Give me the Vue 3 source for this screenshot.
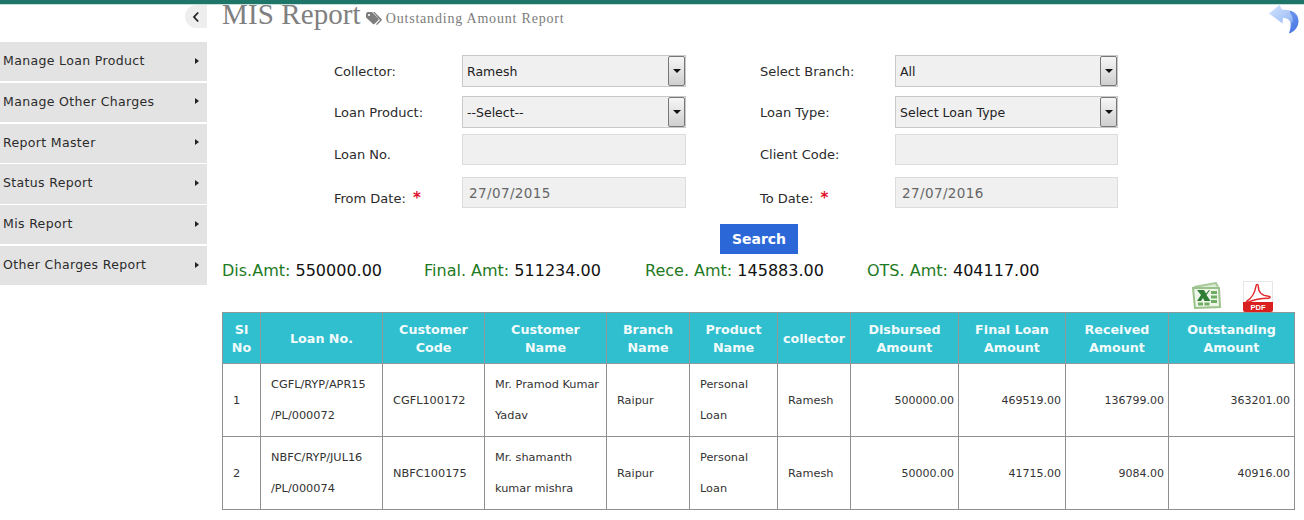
<template>
  <div class="page">
    <div class="topbar"></div>
    <div class="layout">
      <aside class="sidebar">
        <div class="collapse-row">
          <div class="collapse-btn">
            <svg width="8" height="12" viewBox="0 0 8 12"><path d="M6.200 1.500 2 6l4.200 4.500" fill="none" stroke="#222" stroke-width="1.800"/></svg>
          </div>
        </div>
        <ul class="menu">
          <li v-for="item in menu" :key="item">
            <span>{{ item }}</span>
            <i class="caret"></i>
          </li>
        </ul>
      </aside>

      <main class="content">
        <div class="heading">
          <h1>MIS Report</h1>
          <svg class="tag" width="16" height="14" viewBox="0 0 16 14">
            <path d="M0 1.500 1.500 0H6l6.500 6.500a1 1 0 0 1 0 1.400L8.400 12a1 1 0 0 1-1.400 0L0 5.500Z" fill="#7d7d7d"/>
            <path d="M8.500 0 15.500 7a1 1 0 0 1 0 1.400L11 13l-1-.8 4-4.200L7 0Z" fill="#7d7d7d"/>
            <circle cx="3" cy="3" r="1.100" fill="#fff"/>
          </svg>
          <span class="sub">Outstanding Amount Report</span>
          <svg class="back" width="30" height="30" viewBox="0 0 30 30">
            <defs>
              <linearGradient id="bk" x1="0" y1="0" x2="1" y2="1">
                <stop offset="0" stop-color="#d4e4fc"/>
                <stop offset=".55" stop-color="#a6c4f7"/>
                <stop offset="1" stop-color="#4a78e6"/>
              </linearGradient>
            </defs>
            <path d="M10.500 0 0 8.500 13.500 18.500l.5-5.500c4 .2 6.500 1.500 7.500 4.500.8 3-.2 7-1.500 11 5-1.500 9-6 9.400-11.500C29.800 9.500 23 4.500 13 4.500Z" fill="url(#bk)"/>
            <path d="M21 5.500C27 7 29.800 11 29.400 16.500 29 22 25 27 20 28.500c1.300-4 2.300-8 1.500-11C24.500 20 25 12 21 8Z" fill="#3f6fe4" opacity=".6"/>
          </svg>
        </div>

        <form class="filters" @submit.prevent>
          <template v-for="f in filters" :key="f.label">
            <label :class="{ low: !f.options }">{{ f.label }}<b v-if="f.req"> *</b></label>
            <div v-if="f.options" class="select">
              <span>{{ f.value }}</span>
              <span class="arrow"><i></i></span>
            </div>
            <input v-else class="field" type="text" disabled :value="f.value" />
          </template>
        </form>

        <div class="search-row"><button type="button">Search</button></div>

        <div class="totals">
          <span v-for="t in totals" :key="t.label" :style="{ width: t.w + 'px' }"><em>{{ t.label }}</em> {{ t.value }}</span>
        </div>

        <div class="exports">
          <svg width="31" height="27" viewBox="0 0 31 27">
            <path d="M3 5 25 1l2 4" fill="#dcebd6" stroke="#a9cb9b" stroke-width="2"/>
            <path d="M2 6h26l1 19-25 1Z" fill="#eef6ea" stroke="#9cc28c" stroke-width="2"/>
            <path d="M6 8h7l2 3.500L18 8h1l-3.500 5 4 6h-6l-1.500-3-2 3H6l4-6Z" fill="#2f7d34"/>
            <path d="M20 9h6v3h-6zM20 13.500h6v3h-6zM20 18h6v3h-6zM7 20.500h5v3H7zM13.500 20.500h5v3h-5z" fill="#6fae62"/>
          </svg>
          <svg width="32" height="31" viewBox="0 0 32 31">
            <path d="M1.500.5h29v22h-29z" fill="#fff" stroke="#e6e6e6"/>
            <path d="M5 20c5-3 8-9 9-15 .3-2 2.300-2 2.300.2 0 5.800 3.700 9.800 10.200 10 2.200 0 2.200 2-.2 2-6.800 0-14.300 1.300-20.300 4-1.700.5-2.200-.3-1-1.200Z" fill="none" stroke="#e2282c" stroke-width="1.500"/>
            <path d="M1 21h30v8a2 2 0 0 1-2 2H3a2 2 0 0 1-2-2Z" fill="#d9201f"/>
            <text x="16" y="29" text-anchor="middle" class="pdf">PDF</text>
          </svg>
        </div>

        <table>
          <colgroup>
            <col v-for="(w, i) in cols" :key="i" :style="{ width: w + 'px' }" />
          </colgroup>
          <thead>
            <tr>
              <th>Sl<br />No</th>
              <th>Loan No.</th>
              <th>Customer<br />Code</th>
              <th>Customer<br />Name</th>
              <th>Branch<br />Name</th>
              <th>Product<br />Name</th>
              <th>collector</th>
              <th>Disbursed<br />Amount</th>
              <th>Final Loan<br />Amount</th>
              <th>Received<br />Amount</th>
              <th>Outstanding<br />Amount</th>
            </tr>
          </thead>
          <tbody>
            <tr v-for="r in rows" :key="r.sl">
              <td>{{ r.sl }}</td>
              <td>{{ r.loan[0] }}<br />{{ r.loan[1] }}</td>
              <td>{{ r.code }}</td>
              <td>{{ r.name[0] }}<br />{{ r.name[1] }}</td>
              <td>Raipur</td>
              <td>Personal<br />Loan</td>
              <td>Ramesh</td>
              <td class="num">{{ r.disbursed }}</td>
              <td class="num">{{ r.final }}</td>
              <td class="num">{{ r.received }}</td>
              <td class="num">{{ r.outstanding }}</td>
            </tr>
          </tbody>
        </table>
      </main>
    </div>
  </div>
</template>

<script setup>
const menu = [
  'Manage Loan Product',
  'Manage Other Charges',
  'Report Master',
  'Status Report',
  'Mis Report',
  'Other Charges Report',
]

const filters = [
  { label: 'Collector:', value: 'Ramesh', options: true },
  { label: 'Select Branch:', value: 'All', options: true },
  { label: 'Loan Product:', value: '--Select--', options: true },
  { label: 'Loan Type:', value: 'Select Loan Type', options: true },
  { label: 'Loan No.', value: '' },
  { label: 'Client Code:', value: '' },
  { label: 'From Date:', value: '27/07/2015', req: true },
  { label: 'To Date:', value: '27/07/2016', req: true },
]

const totals = [
  { label: 'Dis.Amt:', value: '550000.00', w: 202 },
  { label: 'Final. Amt:', value: '511234.00', w: 221 },
  { label: 'Rece. Amt:', value: '145883.00', w: 222 },
  { label: 'OTS. Amt:', value: '404117.00', w: 200 },
]

const cols = [38, 122, 102, 122, 83, 88, 73, 108, 107, 103, 126]

const rows = [
  {
    sl: 1,
    loan: ['CGFL/RYP/APR15', '/PL/000072'],
    code: 'CGFL100172',
    name: ['Mr. Pramod Kumar', 'Yadav'],
    disbursed: '500000.00',
    final: '469519.00',
    received: '136799.00',
    outstanding: '363201.00',
  },
  {
    sl: 2,
    loan: ['NBFC/RYP/JUL16', '/PL/000074'],
    code: 'NBFC100175',
    name: ['Mr. shamanth', 'kumar mishra'],
    disbursed: '50000.00',
    final: '41715.00',
    received: '9084.00',
    outstanding: '40916.00',
  },
]
</script>

<style>
html, body { margin: 0; background: #fff; }
</style>

<style scoped>
.page {
  height: 520px;
  overflow: hidden;
  font-family: "DejaVu Sans", Verdana, sans-serif;
  color: #222;
}
.topbar {
  position: relative;
  z-index: 1;
  height: 4px;
  background: #1d7667;
  border-bottom: 1px solid #c4dedb;
}
.layout { display: flex; }

.sidebar { width: 207px; flex: none; }
.collapse-row { display: flex; justify-content: flex-end; height: 37px; }
.collapse-btn {
  width: 22px;
  height: 23px;
  background: #eee;
  border-radius: 12px 0 0 12px;
  display: flex;
  align-items: center;
  justify-content: center;
}
.menu { list-style: none; margin: 0; padding: 0; }
.menu li {
  height: 39.200px;
  margin-bottom: 1.600px;
  padding: 0 8px 2px 3px;
  box-sizing: border-box;
  background: #e3e3e3;
  display: flex;
  align-items: center;
  justify-content: space-between;
  font-size: 12.500px;
  letter-spacing: .35px;
  color: #2b2b2b;
}
.caret {
  border-left: 4px solid #222;
  border-top: 3.500px solid transparent;
  border-bottom: 3.500px solid transparent;
}

.content { width: 1072px; margin-left: 15px; }
.heading {
  height: 50px;
  display: flex;
  align-items: flex-start;
  position: relative;
}
.heading h1 {
  margin: -3px 0 0;
  font: 400 29px/24px "Liberation Serif", serif;
  color: #808080;
  letter-spacing: .1px;
}
.tag { margin: 7px 0 0 5px; }
.sub {
  margin: 5px 0 0 4px;
  font: 400 14px/18px "Liberation Serif", serif;
  color: #7c7c7c;
  letter-spacing: .8px;
}
.back { position: absolute; right: -5px; top: 0; }

.filters {
  display: grid;
  grid-template-columns: 128px 224px 74px 135px 223px;
  grid-template-rows: 41px 38px 43px 31px;
  padding-left: 112px;
  align-items: start;
  font-size: 13px;
}
.filters label { color: #2b2b2b; line-height: 34px; }
.filters label.low { margin-top: 5px; line-height: 32px; }
.filters label:nth-of-type(even) { grid-column: 4; }
.filters label b { color: #e0102a; font-size: 15px; margin-left: 2px; }
.select, .field {
  box-sizing: border-box;
  width: 100%;
  font-family: inherit;
}
.select {
  height: 32px;
  border: 1px solid #c9c9c9;
  background: #f0f0f0;
  display: flex;
  align-items: center;
  justify-content: space-between;
  padding: 1px 0 1px 4px;
  font-size: 12.500px;
  color: #222;
}
.arrow {
  box-sizing: border-box;
  width: 17px;
  height: 30px;
  border: 1px solid #777;
  border-radius: 2px;
  background: linear-gradient(#f6f6f6, #cfcfcf);
  display: flex;
  align-items: center;
  justify-content: center;
}
.arrow i {
  border-top: 4px solid #111;
  border-left: 4px solid transparent;
  border-right: 4px solid transparent;
}
.field {
  height: 31px;
  border: 1px solid #dcdcdc;
  background: #f0f0f0;
  padding: 0 6px;
  color: #666;
  font-size: 13.500px;
  letter-spacing: .4px;
}

.search-row { display: flex; padding-left: 498px; margin-top: 16px; }
.search-row button {
  width: 78px;
  height: 30px;
  border: 0;
  background: #2c67d8;
  color: #fff;
  font: 700 14px "DejaVu Sans", Verdana, sans-serif;
  padding: 0;
}
.totals {
  display: flex;
  font-size: 16px;
  line-height: 20px;
  margin-top: 7px;
  color: #111;
}
.totals em { font-style: normal; color: #1e7a1e; }
.exports {
  height: 31px;
  display: flex;
  justify-content: flex-end;
  align-items: flex-start;
  gap: 20px;
  padding-right: 20px;
}
.exports svg:first-child { margin-top: 1px; }
.pdf { font: 700 7.500px "Liberation Sans", sans-serif; fill: #fff; }

table {
  table-layout: fixed;
  width: 1072px;
  border-collapse: collapse;
  font-size: 11.300px;
  border: 1px solid #8f8f8f;
}
th {
  height: 48px;
  padding: 2px 0 0;
  background: #30bfcf;
  color: #f2fbfb;
  font-size: 12.700px;
  font-weight: 700;
  line-height: 18px;
  border: 1px solid #8c9a9c;
}
td {
  height: 72px;
  padding: 0 10px;
  line-height: 31px;
  border: 1px solid #8f8f8f;
  color: #333;
  white-space: nowrap;
}
td.num { text-align: right; padding-right: 4px; font-size: 11px; }
</style>
